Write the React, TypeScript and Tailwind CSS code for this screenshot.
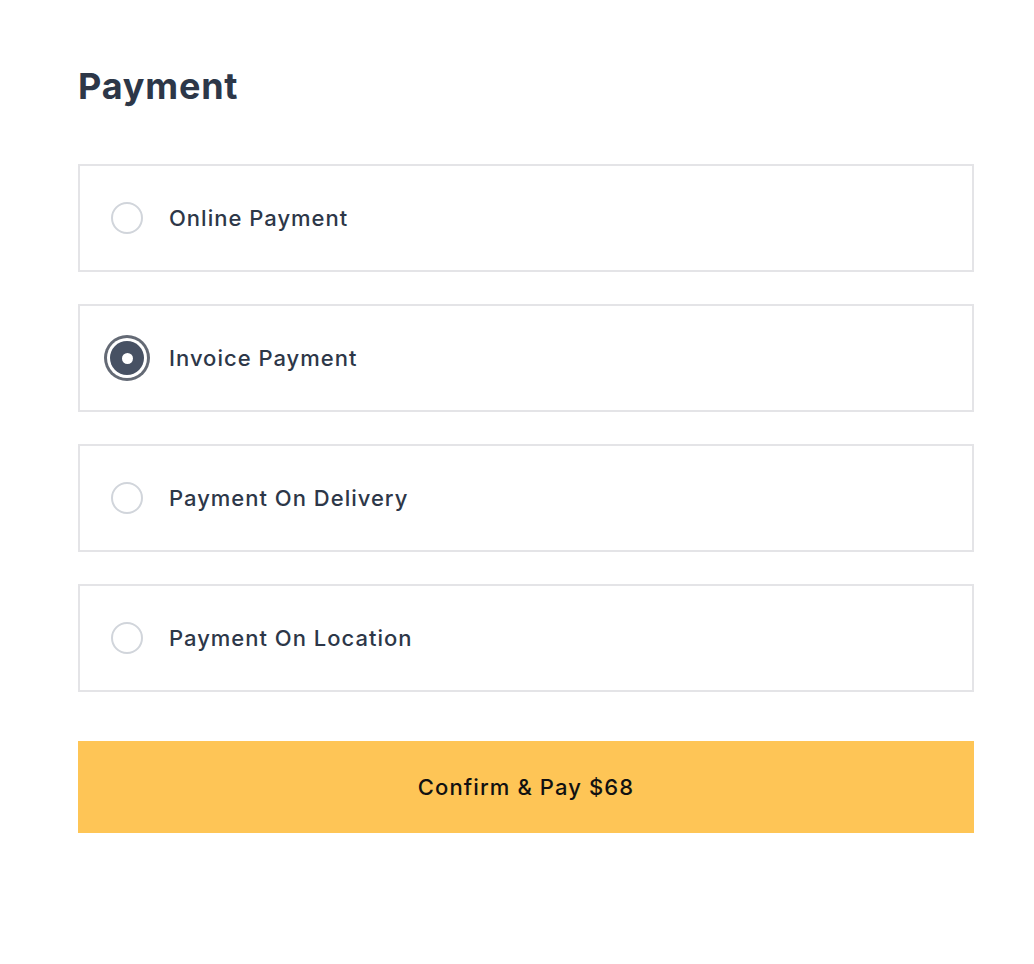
import { useState } from 'react';

const options = [
  'Online Payment',
  'Invoice Payment',
  'Payment On Delivery',
  'Payment On Location',
];

export default function App() {
  const [selected, setSelected] = useState('Invoice Payment');

  return (
    <div
      className="min-h-screen bg-white pl-[78px] pr-[60px] pt-[62px]"
      style={{ fontFamily: 'Inter, "Noto Sans", sans-serif' }}
    >
      <h1 className="text-[36px] leading-[48px] font-bold text-[#2d3748] tracking-[0.8px]">Payment</h1>

      <div className="mt-[54px] flex flex-col gap-[32px]">
        {options.map((label) => {
          const active = label === selected;
          return (
            <button
              key={label}
              onClick={() => setSelected(label)}
              className="flex h-[108px] w-full items-center border-2 border-[#e4e4e7] bg-white pl-[31px] text-left"
            >
              <span className="flex h-8 w-8 items-center justify-center">
                {active ? (
                  <span className="flex h-[34px] w-[34px] shrink-0 items-center justify-center rounded-full bg-[#475163] ring-[3px] ring-[#646a75] ring-offset-[3px] ring-offset-white">
                    <span className="h-[11px] w-[11px] rounded-full bg-white" />
                  </span>
                ) : (
                  <span className="h-8 w-8 rounded-full border-2 border-[#d1d5db] bg-white" />
                )}
              </span>
              <span className="ml-[26px] text-[22px] font-medium tracking-[1px] text-[#2d3748]">{label}</span>
            </button>
          );
        })}
      </div>

      <button className="mt-[49px] flex h-[92px] w-full items-center justify-center bg-[#fec556] text-[22px] font-medium tracking-[1.1px] text-[#111111]">
        Confirm &amp; Pay $68
      </button>
    </div>
  );
}
